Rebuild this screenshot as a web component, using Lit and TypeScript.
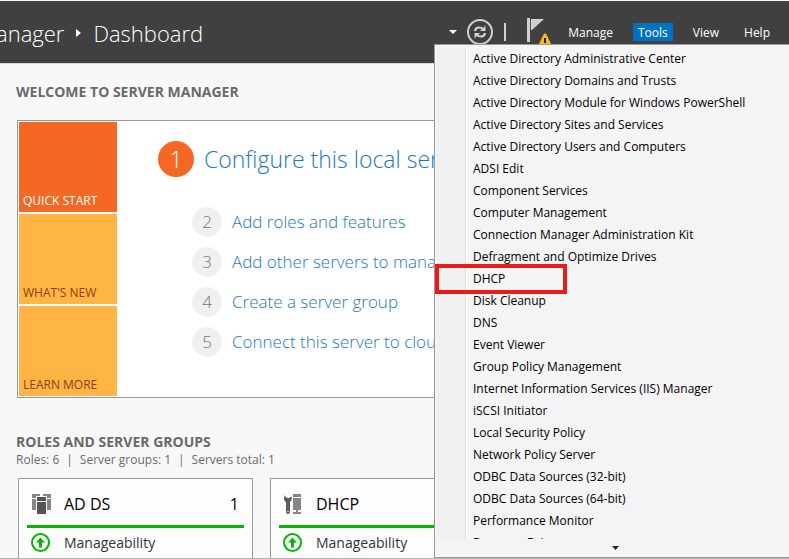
import { LitElement, html, css } from "lit";
import { customElement } from "lit/decorators.js";

const TOOLS = [
  "Active Directory Administrative Center",
  "Active Directory Domains and Trusts",
  "Active Directory Module for Windows PowerShell",
  "Active Directory Sites and Services",
  "Active Directory Users and Computers",
  "ADSI Edit",
  "Component Services",
  "Computer Management",
  "Connection Manager Administration Kit",
  "Defragment and Optimize Drives",
  "DHCP",
  "Disk Cleanup",
  "DNS",
  "Event Viewer",
  "Group Policy Management",
  "Internet Information Services (IIS) Manager",
  "iSCSI Initiator",
  "Local Security Policy",
  "Network Policy Server",
  "ODBC Data Sources (32-bit)",
  "ODBC Data Sources (64-bit)",
  "Performance Monitor",
  "Recovery Drive",
];

const STEPS = [
  "Configure this local server",
  "Add roles and features",
  "Add other servers to manage",
  "Create a server group",
  "Connect this server to cloud services",
];

const upIcon = html`<svg width="20" height="20" viewBox="0 0 20 20">
  <circle cx="9.500" cy="9.500" r="8.500" fill="none" stroke="#00b800" stroke-width="2" />
  <path d="M9.500 4.500l4.500 5h-3v5H8v-5H5z" fill="#00b800" />
</svg>`;

const serversIcon = html`<svg width="20" height="20" viewBox="0 0 20 20">
  <path fill="#868686" d="M0 0h8v2H4v2H0zM11 0h8v4h-4V2h-4zM0 5h4v11H0zM15 5h4v11h-4z" />
  <path fill="#555" d="M5 3h9v4H5zM5 8h9v12H5z" />
</svg>`;

const toolsIcon = html`<svg width="20" height="20" viewBox="0 0 20 20">
  <path
    fill="#5c5c5c"
    d="M3 0.300L3 3.500L4.500 4.200L7.500 2.500C8.300 4.800 7.500 7 6 7.800V18A1.800 1.800 0 0 1 2 18V8C-0.500 7 -0.500 2.500 1 1.200L2 4L3 3.500Z"
  />
  <circle cx="4" cy="17.500" r="0.800" fill="#fdfdfd" />
  <path fill="#868686" d="M9 0h8v3H9zM9 4h8v12H9zM12 16h2v2h3v2H9v-2h3z" />
</svg>`;

@customElement("app-root")
export class AppRoot extends LitElement {
  static styles = css`
    :host {
      display: flex;
      flex-direction: column;
      position: relative;
      box-sizing: border-box;
      height: 100vh;
      overflow: hidden;
      background: #f8f8f8;
      border-top: 1px solid #f8f8f8;
      border-bottom: 1px solid #b4b4b4;
      font-family: "Open Sans", "Noto Sans", sans-serif;
      font-size: 12px;
      color: #000;
    }
    button {
      font: inherit;
      color: inherit;
      border: 0;
      padding: 0;
      background: none;
      text-align: left;
    }
    svg {
      display: block;
      flex: none;
    }
    a {
      color: #1e77bf;
      text-decoration: none;
    }
    h2, h3, ol, ul {
      margin: 0;
      padding: 0;
      font-weight: inherit;
      font-size: inherit;
      list-style: none;
    }
    header {
      flex: none;
      display: flex;
      align-items: center;
      justify-content: space-between;
      height: 62px;
      background: #404040;
      border-bottom: 1px solid #d8d8d8;
      color: #fff;
    }
    .crumbs {
      display: flex;
      align-items: center;
      gap: 12px;
      margin-left: -4px;
      padding-top: 2px;
      font-size: 22px;
      font-weight: 300;
      white-space: nowrap;
    }
    .bar {
      display: flex;
      align-items: center;
      padding-right: 14px;
    }
    .refresh {
      margin: 0 11px 0 10px;
    }
    .flag {
      margin: 0 11px 0 21px;
    }
    .menus {
      display: flex;
      gap: 15px;
    }
    .menus button {
      box-sizing: border-box;
      height: 18px;
      line-height: 16px;
      padding: 2px 5px 0;
    }
    .menus .open {
      background: #0072c6;
    }
    main {
      flex: 1;
      min-height: 0;
      overflow: hidden;
      padding: 18px 16px 0;
    }
    .heading {
      font-size: 14px;
      line-height: 20px;
      font-weight: 700;
      color: #6a6a6a;
    }
    .welcome {
      display: flex;
      margin: 18px 0 34px 1px;
      padding: 1px;
      background: #fff;
      border: 1px solid #9b989b;
    }
    .tiles {
      display: grid;
      gap: 2px;
      flex: none;
      width: 98px;
    }
    .tile {
      display: flex;
      align-items: flex-end;
      height: 90px;
      box-sizing: border-box;
      padding: 0 4px 3px;
      background: #ffb445;
      color: #8a4310;
    }
    .tile.current {
      background: #f56723;
      color: #fff;
    }
    .steps {
      display: flex;
      flex-direction: column;
      gap: 10px;
      padding: 19px 0 0 41px;
      font-weight: 300;
      font-size: 17px;
      line-height: 24px;
      white-space: nowrap;
      overflow: hidden;
    }
    .step {
      display: flex;
      align-items: center;
      gap: 10px;
      height: 30px;
      margin-left: 34px;
    }
    .step.first {
      height: 36px;
      margin: 0 0 20px;
      font-size: 23px;
    }
    .num {
      flex: none;
      width: 30px;
      line-height: 30px;
      border-radius: 50%;
      text-align: center;
      background: #f0f0f0;
      color: #777;
    }
    .first .num {
      width: 36px;
      line-height: 36px;
      background: #f56723;
      color: #fff;
    }
    .totals {
      display: flex;
      gap: 7px;
      line-height: 16px;
      color: #6a6a6a;
    }
    .cards {
      display: flex;
      gap: 17px;
      padding: 10px 2px 0;
    }
    .card {
      flex: none;
      box-sizing: border-box;
      width: 235px;
      height: 200px;
      padding: 0 8px;
      background: #fdfdfd;
      border: 1px solid #9b9b9b;
    }
    .role {
      display: flex;
      align-items: center;
      gap: 12px;
      height: 49px;
      padding: 3px 5px 0;
      box-sizing: border-box;
      border-bottom: 3px solid #00b800;
      font-size: 16px;
    }
    .count {
      margin-left: auto;
    }
    .status {
      display: flex;
      align-items: center;
      gap: 13px;
      height: 30px;
      padding: 0 4px;
      font-size: 14px;
      line-height: 18px;
      color: #333;
    }
    .menu {
      position: absolute;
      top: 43px;
      right: 0;
      bottom: 0;
      width: 355px;
      box-sizing: border-box;
      display: flex;
      flex-direction: column;
      padding-top: 3px;
      background: #f4f4f4;
      border: 1px solid #999;
      border-right: 0;
    }
    .list {
      flex: 1;
      min-height: 0;
      overflow: hidden;
      background: linear-gradient(
        to right,
        #f4f4f4 2px,
        #f0f0f0 2px,
        #f0f0f0 30px,
        #e0e0e0 30px,
        #e0e0e0 31px,
        #fff 31px,
        #fff 32px,
        #f4f4f4 32px
      );
    }
    .item {
      position: relative;
      height: 22px;
      padding-left: 38px;
    }
    .item button {
      display: block;
      line-height: 22px;
      white-space: nowrap;
    }
    .mark {
      position: absolute;
      top: -4px;
      left: 0;
      width: 132px;
      height: 30px;
      box-sizing: border-box;
      border: 4px solid #e81b1b;
      z-index: 1;
    }
    .more {
      flex: none;
      display: flex;
      align-items: center;
      justify-content: center;
      height: 18px;
      width: 100%;
      padding-left: 7px;
    }
  `;

  private role(icon: unknown, name: string, count: string) {
    return html`<section class="card">
      <h3 class="role">${icon}<span>${name}</span><span class="count">${count}</span></h3>
      <div class="status">${upIcon}<span>Manageability</span></div>
    </section>`;
  }

  render() {
    return html`
      <header>
        <div class="crumbs">
          <span>anager</span>
          <svg width="5" height="8" viewBox="0 0 5 8"><path d="M0 0l5 4-5 4z" fill="#fff" /></svg>
          <span>Dashboard</span>
        </div>
        <div class="bar">
          <button aria-label="History">
            <svg width="8" height="4" viewBox="0 0 8 4"><path d="M0 0h8L4 4z" fill="#fff" /></svg>
          </button>
          <button class="refresh" aria-label="Refresh">
            <svg width="26" height="26" viewBox="0 0 26 26" fill="none" stroke="#d0d0d0">
              <circle cx="13" cy="13" r="12" stroke-width="2" />
              <path d="M8 12Q8.500 8.500 12 8.500Q14.500 8.500 16 10M18 14Q17.500 17.500 14 17.500Q11.500 17.500 10 16" stroke-width="2.200" />
              <path d="M18.500 6.500v5.500h-5.500zM7.500 19.500v-5.500h5.500z" fill="#d0d0d0" stroke="none" />
            </svg>
          </button>
          <svg width="2" height="18"><path d="M0 0h2v18H0z" fill="#d0d0d0" /></svg>
          <button class="flag" aria-label="Notifications">
            <svg width="25" height="28" viewBox="0 0 25 28">
              <path d="M0 0h3v24H0z" fill="#d0d0d0" />
              <path d="M4 1h13L5 12H4z" fill="#d0d0d0" />
              <path d="M3 2h1v9H3z" fill="#555" />
              <path d="M18 15.500q1 0 1.500 1L25 28H11l5.500-11.500q.500-1 1.500-1z" fill="#fdb813" />
              <path d="M17 20h2v5h-2zM17 26h2v2h-2z" fill="#222" />
            </svg>
          </button>
          <nav class="menus">
            <button>Manage</button>
            <button class="open">Tools</button>
            <button>View</button>
            <button>Help</button>
          </nav>
        </div>
      </header>
      <main>
        <h2 class="heading">WELCOME TO SERVER MANAGER</h2>
        <section class="welcome">
          <div class="tiles">
            <button class="tile current">QUICK START</button>
            <button class="tile">WHAT'S NEW</button>
            <button class="tile">LEARN MORE</button>
          </div>
          <ol class="steps">
            ${STEPS.map(
              (s, i) => html`<li class="step ${i === 0 ? "first" : ""}">
                <span class="num">${i + 1}</span><a href="#">${s}</a>
              </li>`
            )}
          </ol>
        </section>
        <h2 class="heading">ROLES AND SERVER GROUPS</h2>
        <div class="totals">
          <span>Roles: 6</span><span>|</span><span>Server groups: 1</span><span>|</span><span>Servers total: 1</span>
        </div>
        <div class="cards">
          ${this.role(serversIcon, "AD DS", "1")} ${this.role(toolsIcon, "DHCP", "1")}
        </div>
      </main>
      <div class="menu">
        <ul class="list">
          ${TOOLS.map(
            (t) => html`<li class="item">
              <button>${t}</button>${t === "DHCP" ? html`<span class="mark"></span>` : ""}
            </li>`
          )}
        </ul>
        <button class="more" aria-label="Scroll down">
          <svg width="7" height="4" viewBox="0 0 7 4"><path d="M0 0h7L3.500 4z" fill="#222" /></svg>
        </button>
      </div>
    `;
  }
}
